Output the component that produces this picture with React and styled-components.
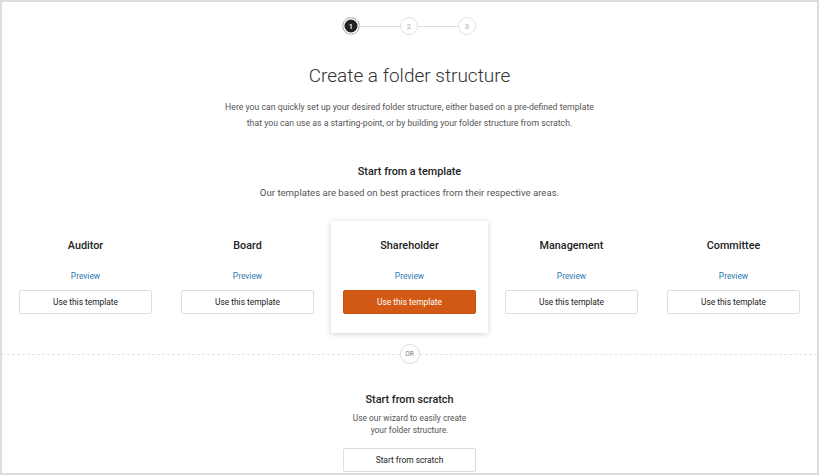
import React from "react";
import styled, { createGlobalStyle } from "styled-components";

const GlobalStyle = createGlobalStyle`
  body {
    margin: 0;
    background: #fff;
    font-family: Roboto, "Liberation Sans", sans-serif;
    color: #333;
  }
`;

const templates = ["Auditor", "Board", "Shareholder", "Management", "Committee"];

const App = () => {
  return (
    <>
      <GlobalStyle />
      <Frame>
        <Stepper>
          <Step active>1</Step>
          <StepLine />
          <Step>2</Step>
          <StepLine />
          <Step>3</Step>
        </Stepper>
        <Title>Create a folder structure</Title>
        <Intro>
          Here you can quickly set up your desired folder structure, either based on a pre-defined template
          <br />
          that you can use as a starting-point, or by building your folder structure from scratch.
        </Intro>
        <SectionTitle top={33}>Start from a template</SectionTitle>
        <SectionText>Our templates are based on best practices from their respective areas.</SectionText>
        <CardGrid>
          {templates.map((name) => (
            <Card key={name} highlighted={name === "Shareholder"}>
              <CardTitle>{name}</CardTitle>
              <PreviewLink>Preview</PreviewLink>
              <Button primary={name === "Shareholder"}>Use this template</Button>
            </Card>
          ))}
        </CardGrid>
        <Divider>
          <OrBadge>OR</OrBadge>
        </Divider>
        <SectionTitle top={28}>Start from scratch</SectionTitle>
        <ScratchText>
          Use our wizard to easily create
          <br />
          your folder structure.
        </ScratchText>
        <Button>Start from scratch</Button>
      </Frame>
    </>
  );
};

export default App;

const Frame = styled.div`
  box-sizing: border-box;
  width: 819px;
  height: 475px;
  border: 2px solid #dcdcdc;
  overflow: hidden;
  display: flex;
  flex-direction: column;
  align-items: center;
  padding-top: 15px;
`;

const Stepper = styled.div`
  display: flex;
  align-items: center;
  margin-left: -1px;
`;

const Step = styled.div`
  box-sizing: border-box;
  width: 18px;
  height: 18px;
  border-radius: 50%;
  display: flex;
  align-items: center;
  justify-content: center;
  font-size: 7.5px;
  font-weight: 500;
  border: 1px solid ${(props) => (props.active ? "#d8d8d8" : "#e2e2e2")};
  background: ${(props) => (props.active ? "#222" : "#fff")};
  color: ${(props) => (props.active ? "#fff" : "#bbb")};
  box-shadow: inset 0 0 0 1.5px #fff;
`;

const StepLine = styled.div`
  width: 40px;
  height: 1px;
  background: #ddd;
`;

const Title = styled.h1`
  margin: 29px 0 0;
  font-size: 19px;
  line-height: 24px;
  font-weight: 300;
  color: #333;
`;

const Intro = styled.p`
  margin: 11px 0 0;
  text-align: center;
  font-size: 8.7px;
  line-height: 16px;
  color: #555;
`;

const SectionTitle = styled.h2`
  margin: ${(props) => props.top}px 0 0;
  font-size: 10.8px;
  line-height: 16px;
  font-weight: 500;
  color: #222;
`;

const SectionText = styled.p`
  margin: 5px 0 0;
  font-size: 9.6px;
  line-height: 16px;
  color: #555;
`;

const CardGrid = styled.div`
  display: grid;
  grid-template-columns: repeat(5, 157px);
  column-gap: 5px;
  margin-top: 20px;
`;

const Card = styled.div`
  display: flex;
  flex-direction: column;
  align-items: center;
  padding: 17px 12px 19px;
  background: #fff;
  box-shadow: ${(props) =>
    props.highlighted ? "0 1px 6px rgba(0, 0, 0, 0.18)" : "none"};
`;

const CardTitle = styled.div`
  font-size: 10.8px;
  line-height: 16px;
  font-weight: 500;
  color: #222;
`;

const PreviewLink = styled.a`
  margin-top: 15px;
  font-size: 8.4px;
  line-height: 14px;
  color: #2f7ab3;
  cursor: pointer;
`;

const Button = styled.button`
  box-sizing: border-box;
  margin-top: 7px;
  width: 133px;
  height: 24px;
  font-family: Roboto, "Liberation Sans", sans-serif;
  font-size: 8.4px;
  border-radius: 2px;
  cursor: pointer;
  border: 1px solid ${(props) => (props.primary ? "#c9520f" : "#dedede")};
  background: ${(props) => (props.primary ? "#d35a15" : "#fff")};
  color: ${(props) => (props.primary ? "#fff" : "#222")};
`;

const Divider = styled.div`
  align-self: stretch;
  margin-top: 11px;
  display: flex;
  align-items: center;
  justify-content: center;

  &::before,
  &::after {
    content: "";
    flex: 1;
    border-top: 1px dashed #e4e4e4;
  }
`;

const OrBadge = styled.div`
  box-sizing: border-box;
  width: 20px;
  height: 20px;
  border-radius: 50%;
  border: 1.5px solid #ddd;
  display: flex;
  align-items: center;
  justify-content: center;
  font-size: 6.5px;
  color: #777;
`;

const ScratchText = styled.p`
  margin: 4px 0 5px;
  text-align: center;
  font-size: 8.4px;
  line-height: 12px;
  color: #555;
`;
